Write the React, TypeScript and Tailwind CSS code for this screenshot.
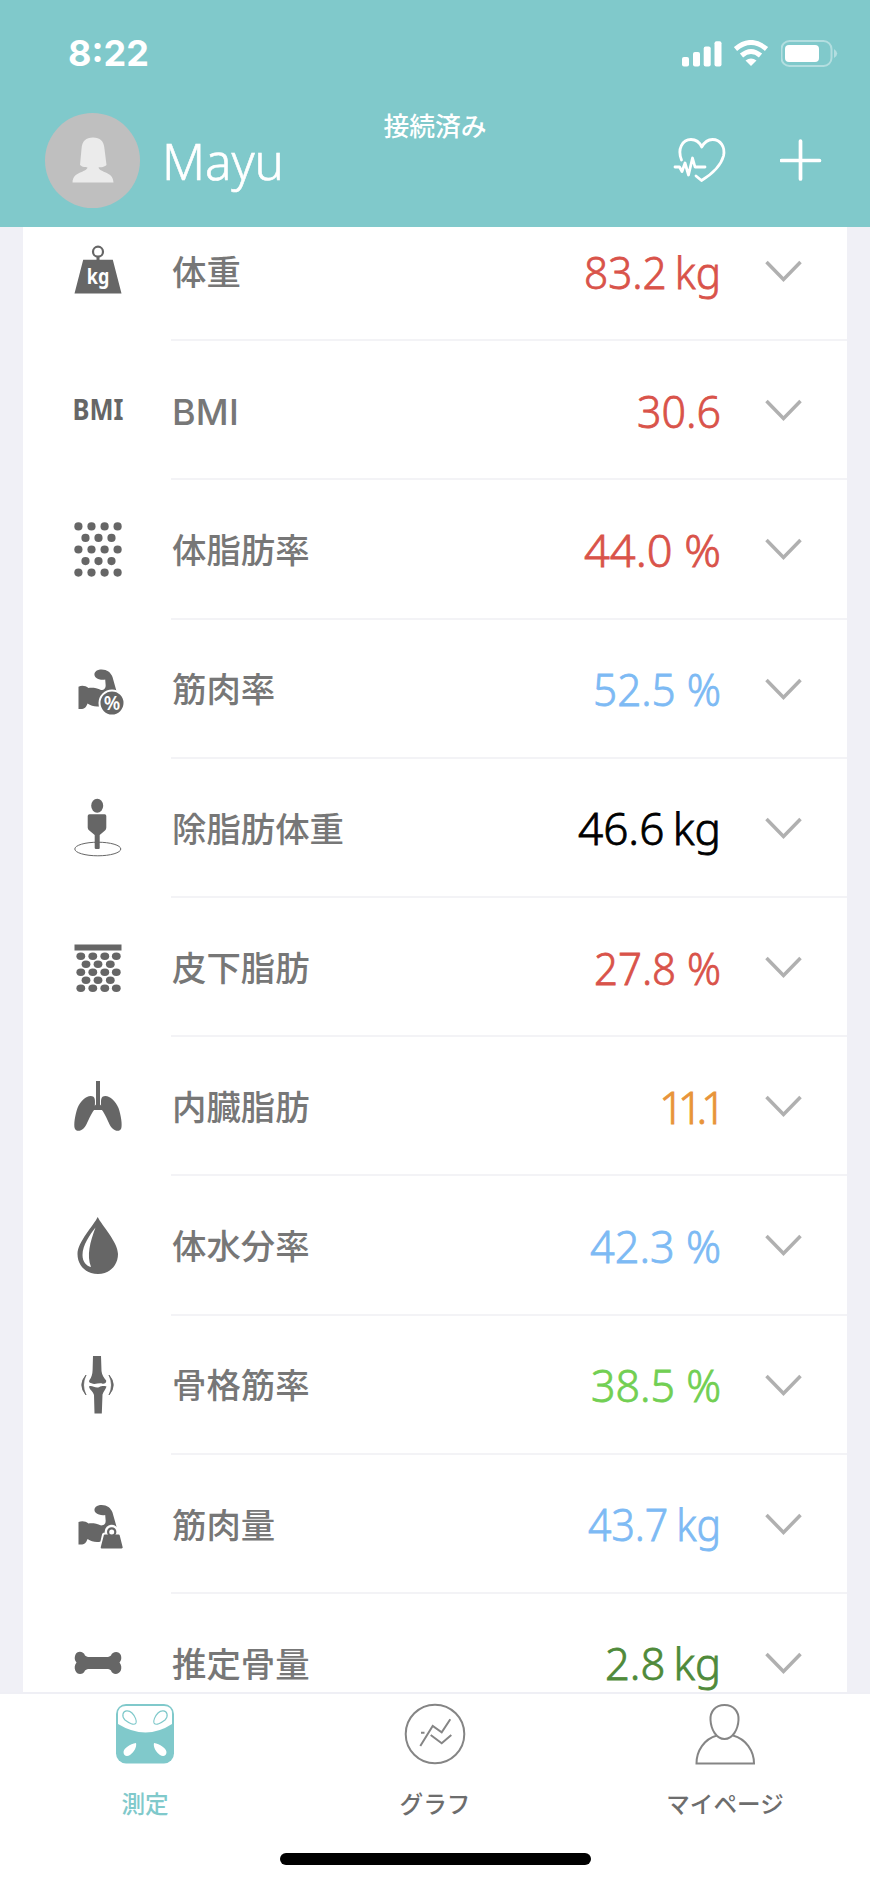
import type { ReactNode } from "react";

const DARK = "#666666";

function WeightIcon() {
  return (
    <svg width="60" height="60" viewBox="0 0 60 60">
      <circle cx="30" cy="9.7" r="5" fill="none" stroke={DARK} strokeWidth="2.2" />
      <path d="M28.5 15H31.5V18H28.5ZM15.2 17.7H44.8L53.5 51.4H6.5Z" fill={DARK} />
      <text x="30" y="42" textAnchor="middle" fontFamily="Noto Sans" fontWeight="700" fontSize="21.5" textLength="22.5" lengthAdjust="spacingAndGlyphs" fill="#fff">kg</text>
    </svg>
  );
}

function BmiIcon() {
  return (
    <svg width="60" height="60" viewBox="0 0 60 60" className="overflow-visible">
      <text x="30" y="39.3" textAnchor="middle" fontFamily="Noto Sans" fontWeight="700" fontSize="29" textLength="51" lengthAdjust="spacingAndGlyphs" fill={DARK}>BMI</text>
    </svg>
  );
}

function DotsIcon() {
  return (
    <svg width="60" height="60" viewBox="0 0 60 60" fill={DARK}>
      {[0, 1, 2, 3, 4].map((r) =>
        (r % 2 ? [17.5, 30.5, 43.5] : [10.4, 23.5, 36.6, 49.6]).map((x) => (
          <circle key={`${r}-${x}`} cx={x} cy={6.4 + r * 11.55} r="4.1" />
        )),
      )}
    </svg>
  );
}

function SkinIcon() {
  return (
    <svg width="60" height="60" viewBox="0 0 60 60" fill={DARK}>
      <rect x="6.5" y="6.5" width="47" height="6" />
      {[0, 1, 2, 3, 4].map((r) =>
        (r % 2 ? [18, 30, 42.3] : [12.8, 24.8, 36.8, 48.3]).map((x) => (
          <ellipse key={`${r}-${x}`} cx={x} cy={18.3 + r * 8} rx="4.4" ry="3.7" />
        )),
      )}
    </svg>
  );
}

const ARM =
  "M10.5 22.7C14 21.2 17.5 21.8 20.5 24C24.5 23.6 29 24 33 26C36.5 26 38 24 37.6 20.5L37.2 15.5C34.5 16.2 30 15.5 27.5 13.2C25 10 27 6.5 32 5.6C38.5 5 42.5 8 44.5 13L49 29L45 42L33 42C28 43.5 23.5 42 19.5 39.5C18.6 42 17.5 44.6 14 45H10.5Z";

function MusclePercentIcon() {
  return (
    <svg width="60" height="60" viewBox="0 0 60 60">
      <g transform="translate(0 5)">
        <path d={ARM} fill={DARK} />
        <circle cx="44" cy="39" r="12.5" fill={DARK} stroke="#fff" strokeWidth="2" />
        <text x="44" y="46" textAnchor="middle" fontFamily="Noto Sans" fontWeight="600" fontSize="19.5" textLength="16.5" lengthAdjust="spacingAndGlyphs" fill="#fff">%</text>
      </g>
    </svg>
  );
}

function MuscleMassIcon() {
  return (
    <svg width="60" height="60" viewBox="0 0 60 60">
      <g transform="translate(0 5.4)">
        <path d={ARM} fill={DARK} />
        <circle cx="43.7" cy="32.3" r="7" fill="#fff" />
        <path d="M36.5 35.5H51L53.7 48H33.7Z" fill={DARK} stroke="#fff" strokeWidth="5" strokeLinejoin="round" />
        <path d="M36.8 36.2H50.7L53.7 48H33.7Z" fill={DARK} stroke={DARK} strokeWidth="2" strokeLinejoin="round" />
        <circle cx="43.7" cy="32.5" r="3.6" fill="#fff" stroke={DARK} strokeWidth="2.2" />
      </g>
    </svg>
  );
}

function BodyIcon() {
  return (
    <svg width="60" height="60" viewBox="0 0 60 60" fill={DARK}>
      <ellipse cx="29.8" cy="51" rx="23" ry="6.8" fill="none" stroke={DARK} strokeWidth="1" />
      <ellipse cx="29.2" cy="7.7" rx="6" ry="7" />
      <path d="M21.5 16.3H36.7Q38.3 16.3 38.3 18V29.5Q38.3 31.5 37 32.5L31.7 37V50Q31.7 51 30.8 51H28Q26.7 51 26.7 50V37L21.3 32.5Q19.7 31.5 19.7 29.5V18Q19.7 16.3 21.5 16.3Z" />
    </svg>
  );
}

function LungsIcon() {
  return (
    <svg width="60" height="60" viewBox="0 0 60 60" fill={DARK}>
      <path d="M28 4H32V27.5L34 29.5V33H26V29.5L28 27.5Z" />
      <path d="M25.5 19.7C20 17 13 23 9.5 31C7 38 5.5 48 6.8 51.5C8 54.5 12 54.8 15.5 51.5C19.5 48 21 39 27 31.8C26.5 28 28 22 25.5 19.7Z" />
      <path d="M34.5 19.7C40 17 47 23 50.5 31C53 38 54.5 48 53.2 51.5C52 54.5 48 54.8 44.5 51.5C40.5 48 39 39 33 31.8C33.5 28 32 22 34.5 19.7Z" />
    </svg>
  );
}

function DropIcon() {
  return (
    <svg width="60" height="60" viewBox="0 0 60 60">
      <path d="M29.7 1C33.5 9 50 26 50 38C50 50 41 58 30 58C18.5 58 9.5 50 9.5 38C9.5 26 26 9 29.7 1Z" fill={DARK} />
      <path d="M27.5 11.5C22 18.5 14.5 29 14.5 39C14.5 46 18.5 50 23 51C18.5 39.5 22 26 27.5 11.5Z" fill="#fff" />
    </svg>
  );
}

function JointIcon() {
  return (
    <svg width="60" height="60" viewBox="0 0 60 60" fill={DARK}>
      <path d="M25 1H33L33.5 16C33.8 20 36 23 38.2 25.5C38.5 28 36.5 29 34.5 28.7C31 27.5 27 30 23.5 28.3C21 28 20.5 26 21.5 25C23.5 22.5 24.5 19 24.6 15Z" />
      <path d="M21 31.5C24 30 27 33.5 31 32.2C34 30.8 36 31 38.5 31.5C38 34 35.5 36 34.5 39.5L33.8 58.5H26.5L26 40C25 36 21.5 35 21 31.5Z" />
      <path d="M18 20Q9.5 30 18 40Q13 30 18 20ZM41 20Q49.5 30 41 40Q46 30 41 20Z" stroke={DARK} strokeWidth="0.8" />
    </svg>
  );
}

function BoneIcon() {
  return (
    <svg width="60" height="60" viewBox="0 0 60 60">
      <path d="M17 22.5C19.5 24.5 21 24 23 24H37C39 24 40.5 24.5 43 22.5C44 18.5 51 17.5 52.8 22C53.7 25 53.5 27 51.5 29.5C53.5 32 53.7 35 52.8 37.500C50.5 42.5 44 41.5 43 37.5C41 35.5 39 36 37 36H23C21 36 19.5 35.5 17 37.5C15.5 42 9 42.5 7.3 37.5C6.3 35 6.5 32 8.5 29.5C6.5 27 6.3 25 7.3 22C9 17.5 15.5 18 17 22.5Z" fill={DARK} />
    </svg>
  );
}

type Metric = {
  label: string;
  value: string;
  // rendered width of the value, keeps the numerals condensed
  width: number;
  color: string;
  icon: ReactNode;
};

const metrics: Metric[] = [
  { label: "体重", value: "83.2 kg", width: 137, color: "#d9534a", icon: <WeightIcon /> },
  { label: "BMI", value: "30.6", width: 84, color: "#d9534a", icon: <BmiIcon /> },
  { label: "体脂肪率", value: "44.0 %", width: 137, color: "#d9534a", icon: <DotsIcon /> },
  { label: "筋肉率", value: "52.5 %", width: 128, color: "#7dbaf4", icon: <MusclePercentIcon /> },
  { label: "除脂肪体重", value: "46.6 kg", width: 143, color: "#000000", icon: <BodyIcon /> },
  { label: "皮下脂肪", value: "27.8 %", width: 127, color: "#d9534a", icon: <SkinIcon /> },
  { label: "内臓脂肪", value: "11.1", width: 67, color: "#e8943a", icon: <LungsIcon /> },
  { label: "体水分率", value: "42.3 %", width: 131, color: "#7dbaf4", icon: <DropIcon /> },
  { label: "骨格筋率", value: "38.5 %", width: 130, color: "#72cf53", icon: <JointIcon /> },
  { label: "筋肉量", value: "43.7 kg", width: 133, color: "#7dbaf4", icon: <MuscleMassIcon /> },
  { label: "推定骨量", value: "2.8 kg", width: 116, color: "#4f8a3a", icon: <BoneIcon /> },
];

function MetricValue({ value, width, color }: { value: string; width: number; color: string }) {
  const narrow = value === "11.1";
  return (
    <svg width={width} height="60" className="overflow-visible">
      <text
        x={narrow ? 5 : 0}
        y="48.2"
        fontFamily="Noto Sans"
        fontWeight="300"
        fontSize="44"
        wordSpacing={value.endsWith("kg") ? "-3" : "0"}
        textLength={width}
        lengthAdjust={narrow ? "spacing" : "spacingAndGlyphs"}
        fill={color}
        stroke={color}
        strokeWidth="0.8"
      >
        {value}
      </text>
    </svg>
  );
}

function MetricRow({ metric }: { metric: Metric }) {
  return (
    <div className="flex h-[139.2px] shrink-0 items-center pl-[45px]">
      {metric.icon}
      <div className="ml-[43px] flex h-full flex-1 items-center border-b-2 border-[#f3f3f6] pr-[45px]">
        <span className="flex-1 pt-[5px] pl-px font-[Inter,'Noto_Sans_CJK_JP',sans-serif] text-[34.4px] leading-none font-medium text-[#777]">
          {metric.label === "BMI" ? <span className="text-[36px] tracking-[0.2px]">BMI</span> : metric.label}
        </span>
        <MetricValue value={metric.value} width={metric.width} color={metric.color} />
        <svg width="37" height="24" viewBox="0 0 37 24" className="mt-[3px] ml-[44px]">
          <path d="M1.5 2L18.5 19.5L35.5 2" fill="none" stroke="#b0b0b0" strokeWidth="3.5" />
        </svg>
      </div>
    </div>
  );
}

function Header() {
  return (
    <header className="relative z-10 h-[227px] shrink-0 bg-[#80c9cb] text-white">
      <div className="flex h-[106px] items-center justify-between pr-[31px] pl-[68px]">
        <span className="font-[Inter] text-[36px] leading-none font-bold">8:22</span>
        <div className="flex items-center gap-[11px]">
          <svg width="41" height="27" viewBox="0 0 41 27" fill="#fff">
            <rect x="0" y="17" width="7" height="9.5" rx="2" />
            <rect x="11" y="12" width="7" height="14.5" rx="2" />
            <rect x="21.7" y="6.5" width="7" height="20" rx="2" />
            <rect x="32.5" y="1.3" width="7" height="25.2" rx="2" />
          </svg>
          <svg width="36" height="27" viewBox="0 0 36 27" fill="none" stroke="#fff" strokeWidth="5">
            <path d="M1.5 9Q17 -4 32.5 9" />
            <path d="M7.5 15.5Q17 7.5 26.5 15.5" />
            <path d="M17 26L11.5 20.5Q17 16.5 22.5 20.5Z" fill="#fff" stroke="none" />
          </svg>
          <svg width="58" height="27" viewBox="0 0 58 27">
            <rect x="0.5" y="1" width="50" height="25" rx="8" fill="none" stroke="#fff" strokeOpacity="0.4" strokeWidth="2" />
            <rect x="4" y="5" width="34" height="17" rx="4" fill="#fff" />
            <path d="M53 9Q59.500 13.5 53 18Z" fill="#fff" fillOpacity="0.4" />
          </svg>
        </div>
      </div>
      <div className="flex h-[108px] items-center pr-[48px] pl-[45px]">
        <div className="flex size-[95px] items-center justify-center rounded-full bg-[#bfbfbf]">
          <svg width="42" height="46" viewBox="0 0 42 46" fill="#ebebeb">
            <path d="M8 28L9.5 12C10 4 14 .5 21 .5C28 .5 32 4 32.5 12L34.5 28C31 31 28 30 26.5 30.5C28 36 41 34 41.5 45.5H.5C1 34 14 36 15.5 30.5C13 30 11 30.5 8 28Z" />
          </svg>
        </div>
        <svg width="118" height="60" className="ml-[25px] overflow-visible">
          <text x="-3" y="50" fontFamily="Noto Sans" fontWeight="300" fontSize="49" textLength="122" lengthAdjust="spacingAndGlyphs" fill="#fff" stroke="#fff" strokeWidth="0.6">Mayu</text>
        </svg>
        <div className="ml-auto flex items-center gap-[53px]">
          <svg width="54" height="46" viewBox="0 0 54 46" fill="none" stroke="#fff" strokeWidth="2.8" strokeLinejoin="round" strokeLinecap="round">
            <path d="M8.5 23C4 12 9.500 2.500 18 2.500C23.500 2.500 26.500 5 28.700 10C31.500 5 34.500 2.500 39.500 2.500C47.500 2.500 52.500 10 50.500 19C47.500 30 37.500 38 28.500 43.500L23 39" />
            <path d="M2 30H6.500L9 34.500L12 26L15.500 38L19.500 21L22 30H32" />
          </svg>
          <svg width="42" height="44" viewBox="0 0 42 44" stroke="#fff" strokeWidth="3.7" strokeLinecap="round">
            <path d="M20.500 3V41M1.500 22.500H39.500" />
          </svg>
        </div>
      </div>
      {/* connection state sits over the title row */}
      <div className="absolute inset-x-0 top-[112px] text-center text-[25.8px] leading-[26px] font-medium">接続済み</div>
    </header>
  );
}

function TabBar() {
  return (
    <nav className="relative z-10 flex h-[192px] shrink-0 flex-col items-center border-t-2 border-[#efeff5] bg-white text-[23.6px] font-medium text-[#6d6d6d]">
      <div className="grid w-full grid-cols-3">
        <div className="flex flex-col items-center pt-[9px] text-[#80c9cb]">
          <svg width="60" height="62" viewBox="0 0 60 62">
            <rect x="1" y="1" width="58" height="59.5" rx="10" fill="#80c9cb" />
            <path d="M3 21V11Q3 3 11 3H49Q57 3 57 11V21Q31 38 3 21Z" fill="#fff" />
            <path d="M8 11C9 7 14 7 17 10C20 13 22 18 21 20C19 23 14 20 10 17C8 15 7.5 13 8 11ZM52 11C51 7 46 7 43 10C40 13 38 18 39 20C41 23 46 20 50 17C52 15 52.5 13 52 11Z" fill="none" stroke="#80c9cb" strokeWidth="1.2" />
            <path d="M21 40C15 41 9 45 8.5 49C8.5 53 12 54 15 52C19 49 22 44 21 40ZM39 40C45 41 51 45 51.5 49C51.5 53 48 54 45 52C41 49 38 44 39 40Z" fill="#fff" />
          </svg>
          <span className="mt-[21px]">測定</span>
        </div>
        <div className="flex flex-col items-center pt-[9px]">
          <svg width="62" height="62" viewBox="0 0 62 62" fill="none" stroke="#858585" strokeWidth="2">
            <circle cx="31" cy="31" r="29.3" />
            <path d="M16.3 43L28.7 23L37.7 29.3L46.3 16.3M17 29.7H20.5M26.7 32L37.7 40.3L47.3 32" />
          </svg>
          <span className="mt-[21px]">グラフ</span>
        </div>
        <div className="flex flex-col items-center pt-[9px]">
          <svg width="60" height="62" viewBox="0 0 60 62" fill="none" stroke="#858585" strokeWidth="2">
            <path d="M29.5 2C20 2 15 9 15.5 17C16 26 21 36 29.5 36C38 36 43 26 43.5 17C44 9 39 2 29.5 2Z" />
            <path d="M22 32.5C9 36 1.5 48 1.5 60.5H59C59 48 51 36 38 32.5" />
          </svg>
          <span className="mt-[21px]">マイページ</span>
        </div>
      </div>
      <div className="mt-auto mb-[19px] h-[12px] w-[311px] rounded-full bg-black" />
    </nav>
  );
}

export default function App() {
  return (
    <div className="flex h-[1884px] w-[870px] flex-col overflow-hidden bg-[#f0f0f6] font-['Noto_Sans_CJK_JP',sans-serif]">
      <Header />
      <main className="min-h-0 flex-1 overflow-hidden">
        <div className="mx-[23px] -mt-[25px] flex flex-col bg-white">
          {metrics.map((m) => (
            <MetricRow key={m.label} metric={m} />
          ))}
        </div>
      </main>
      <TabBar />
    </div>
  );
}
